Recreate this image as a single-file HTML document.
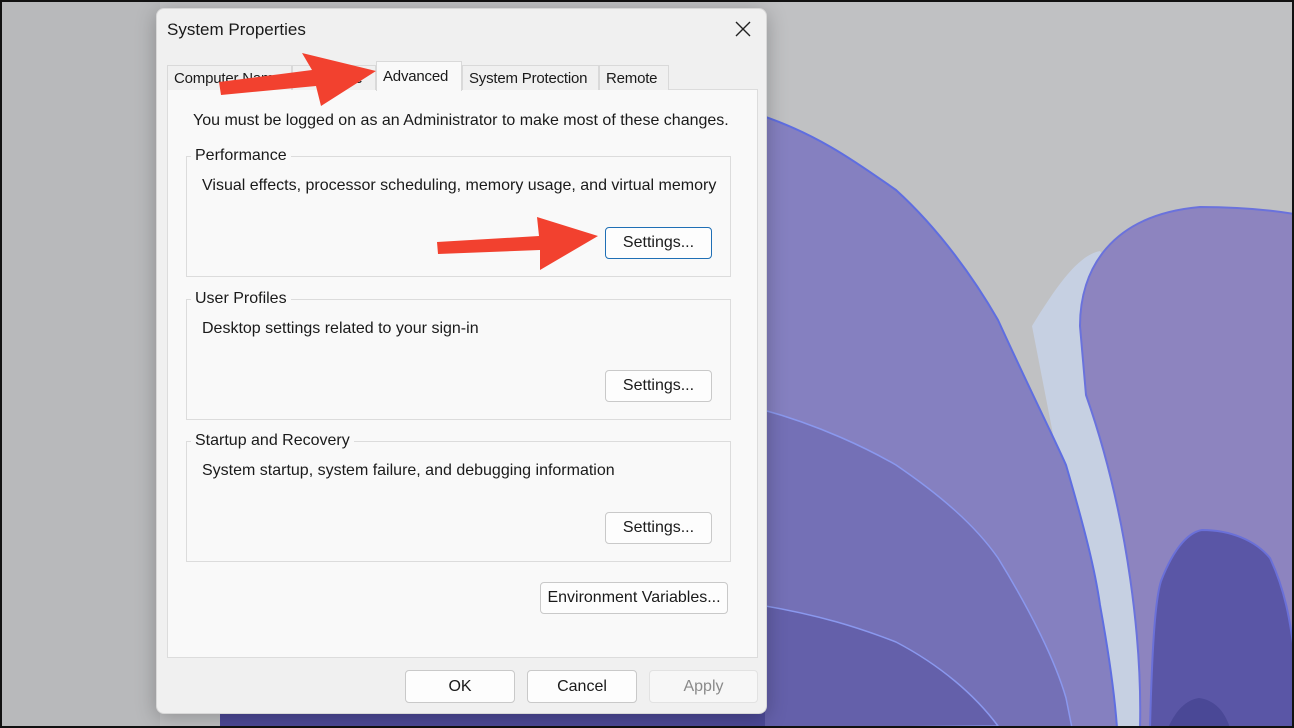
<!DOCTYPE html>
<html><head><meta charset="utf-8"><style>
*{margin:0;padding:0;box-sizing:border-box}
body{width:1294px;height:728px;overflow:hidden;background:#111;font-family:"Liberation Sans",Arial,sans-serif;font-size:16px;color:#1a1a1a;position:relative}
#wall{position:absolute;left:2px;top:2px;width:1290px;height:724px}
.dlg{position:absolute;left:156px;top:8px;width:611px;height:706px;background:#f0f0f0;border-radius:8px;border:1px solid #d8d8d8;box-shadow:0 4px 20px rgba(0,0,0,.25)}
.a{position:absolute;white-space:nowrap}
.panel{position:absolute;left:10px;top:80px;width:591px;height:569px;background:#f9f9f9;border:1px solid #dcdcdc}
.tab{position:absolute;top:56px;height:25px;border:1px solid #d9d9d9;border-bottom:none;background:#f0f0f0;padding:4px 0 0 6px;font-size:15px;overflow:hidden;white-space:nowrap;letter-spacing:-0.2px}
.grp{position:absolute;border:1px solid #dcdcdc;left:29px;width:545px;height:121px}
.btn{position:absolute;background:#fdfdfd;border:1px solid #c9c9c9;border-radius:4px;text-align:center;font-size:16px}
</style></head><body>
<svg id="wall" viewBox="2 2 1290 724">
<rect x="0" y="0" width="1294" height="728" fill="#c0c1c3"/>
<rect x="0" y="0" width="160" height="728" fill="#b8b9bb"/>
<path d="M1032 326 C1060 280 1080 255 1100 251 L1140 300 L1145 728 L1110 728 Z" fill="#c6d0e2"/>
<path d="M1080 326 C1080 270 1110 215 1200 207 C1240 207 1270 210 1294 214 L1294 728 L1140 728 C1142 650 1130 520 1086 395 Z" fill="#8d84bf" stroke="#6a72dc" stroke-width="2"/>
<path d="M760 115 C820 135 860 165 896 190 C940 230 975 280 998 320 C1030 390 1055 440 1066 465 C1085 530 1095 570 1100 605 C1110 660 1115 700 1117 728 L760 728 Z" fill="#8580c0" stroke="#5f6ee0" stroke-width="2"/>
<path d="M760 409 C820 425 870 450 896 465 C940 495 975 525 998 558 C1030 610 1055 660 1066 698 L1072 728 L760 728 Z" fill="#7470b6" stroke="#8a98ee" stroke-width="1.5"/>
<path d="M760 605 C820 615 860 628 896 642 C940 665 975 695 998 726 L760 728 Z" fill="#6460aa" stroke="#8a98ee" stroke-width="1.5"/>
<path d="M1150 728 C1152 650 1155 600 1161 581 C1175 545 1190 532 1202 530 C1230 530 1255 540 1270 558 C1285 590 1290 620 1294 651 L1294 728 Z" fill="#5a56a6" stroke="#6a70d8" stroke-width="2"/>
<path d="M1168 728 C1175 712 1185 700 1199 698 C1215 700 1225 712 1230 728 Z" fill="#4a4896"/>
<rect x="220" y="712" width="545" height="20" fill="#4d4a98"/>
</svg>
<div class="dlg">
<div class="a" style="left:10px;top:11px;font-size:17px">System Properties</div>
<svg class="a" style="left:577px;top:11px" width="18" height="18"><path d="M2 2L16 16M16 2L2 16" stroke="#222" stroke-width="1.4"/></svg>
<div class="panel"></div>
<div class="tab" style="left:10px;width:125px">Computer Name</div>
<div class="tab" style="left:135px;width:84px">Hardware</div>
<div class="tab" style="left:442px;width:70px">Remote</div>
<div class="tab" style="left:305px;width:137px">System Protection</div>
<div class="tab" style="left:219px;top:52px;height:30px;width:86px;background:#f9f9f9;padding-top:6px">Advanced</div>
<div class="a" style="left:36px;top:103px">You must be logged on as an Administrator to make most of these changes.</div>
<div class="grp" style="top:147px"></div>
<div class="a" style="left:34px;top:138px;background:#f9f9f9;padding:0 4px">Performance</div>
<div class="a" style="left:45px;top:168px">Visual effects, processor scheduling, memory usage, and virtual memory</div>
<div class="btn" style="left:448px;top:218px;width:107px;height:32px;line-height:30px;border:1px solid #1f6fb5">Settings...</div>
<div class="grp" style="top:290px"></div>
<div class="a" style="left:34px;top:281px;background:#f9f9f9;padding:0 4px">User Profiles</div>
<div class="a" style="left:45px;top:311px">Desktop settings related to your sign-in</div>
<div class="btn" style="left:448px;top:361px;width:107px;height:32px;line-height:30px">Settings...</div>
<div class="grp" style="top:432px"></div>
<div class="a" style="left:34px;top:423px;background:#f9f9f9;padding:0 4px">Startup and Recovery</div>
<div class="a" style="left:45px;top:453px">System startup, system failure, and debugging information</div>
<div class="btn" style="left:448px;top:503px;width:107px;height:32px;line-height:30px">Settings...</div>
<div class="btn" style="left:383px;top:573px;width:188px;height:32px;line-height:30px">Environment Variables...</div>
<div class="btn" style="left:248px;top:661px;width:110px;height:33px;line-height:31px">OK</div>
<div class="btn" style="left:370px;top:661px;width:110px;height:33px;line-height:31px">Cancel</div>
<div class="btn" style="left:492px;top:661px;width:109px;height:33px;line-height:31px;color:#8a8a8a;background:#f7f7f7;border-color:#e2e2e2">Apply</div>
</div>
<svg class="a" style="left:0;top:0" width="1294" height="728">
<path d="M219 82 L312 70 L302 53 L376 71 L321 106 L316 86 L221 95 Z" fill="#f2412f"/>
<path d="M437 242 L539 236 L537 217 L598 236 L540 270 L540 250 L438 254 Z" fill="#f2412f"/>
</svg>
</body></html>
